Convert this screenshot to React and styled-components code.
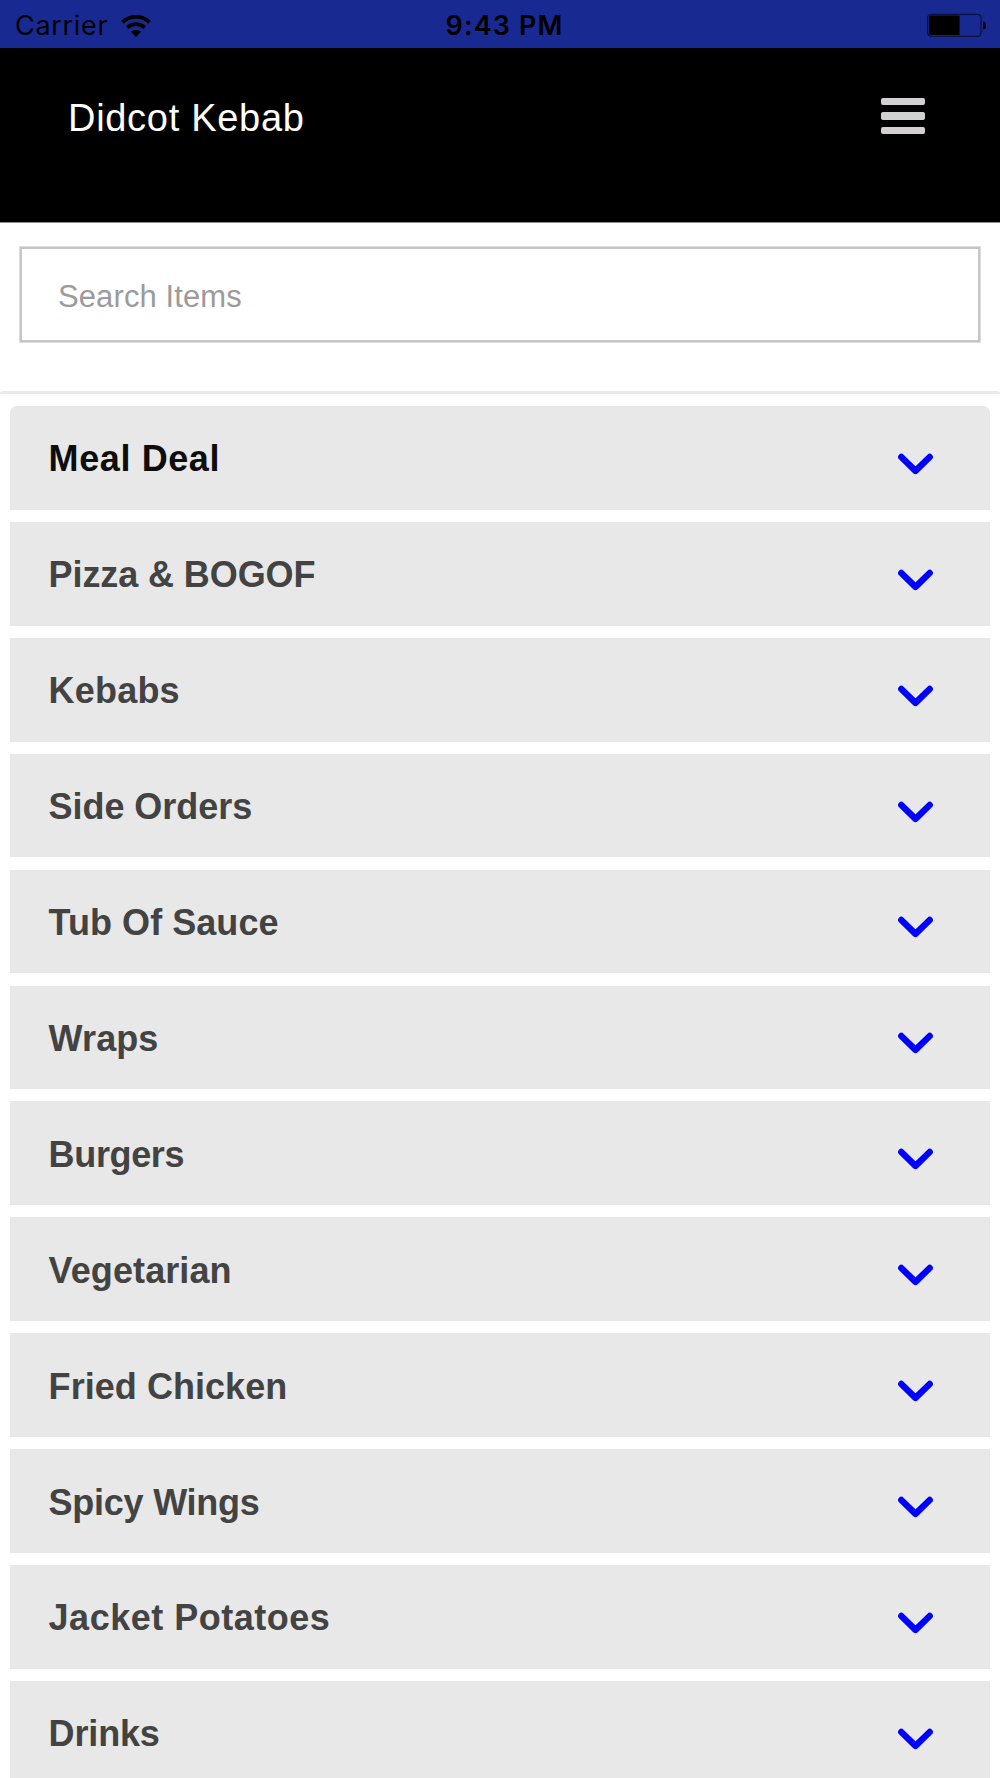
import React from "react";
import styled, { createGlobalStyle } from "styled-components";

const GlobalStyle = createGlobalStyle`
  * {
    box-sizing: border-box;
  }
  body {
    margin: 0;
    background: #fff;
    font-family: "Liberation Sans", Arial, sans-serif;
  }
`;

const Screen = styled.div`
  width: 1000px;
  height: 1778px;
  overflow: hidden;
  background: #fff;
`;

const StatusBar = styled.div`
  display: grid;
  grid-template-columns: 1fr auto 1fr;
  align-items: center;
  height: 48px;
  padding: 0 14px 0 15px;
  background: #182a92;
  color: #000;
  font-family: Inter, sans-serif;
  font-size: 27px;
  line-height: 48px;
`;

const Carrier = styled.div`
  display: flex;
  align-items: center;
  gap: 12px;
  padding-top: 1px;
  letter-spacing: 0.7px;
`;

const Time = styled.div`
  padding: 2px 0 0 8px;
  font-weight: 600;
  letter-spacing: 1.1px;
`;

const StatusIcon = styled.svg`
  display: block;
  justify-self: end;
`;

const Header = styled.header`
  display: flex;
  justify-content: space-between;
  height: 175px;
  padding: 49px 75px 0 68px;
  background: #000;
  border-bottom: 1px solid #8a8a8a;
`;

const Title = styled.h1`
  margin: 1px 0 0;
  color: #fff;
  font-size: 38px;
  font-weight: 400;
  line-height: 40px;
  letter-spacing: 0.7px;
`;

const MenuButton = styled.button`
  display: flex;
  flex-direction: column;
  gap: 6.8px;
  width: 44px;
  height: 37px;
  margin-top: 0.6px;
  padding: 0;
  border: 0;
  background: none;
`;

const MenuBar = styled.span`
  height: 7.7px;
  border-radius: 2px;
  background: #d2d0d2;
`;

const SearchArea = styled.div`
  height: 168px;
  padding: 24px 20px 0;
`;

const SearchInput = styled.input`
  display: block;
  width: 100%;
  height: 95px;
  padding: 4px 36px 0;
  border: 2px solid #c6c6c6;
  border-radius: 0;
  box-shadow: 0 0 0 1px #dedede;
  background: #fff;
  font-family: inherit;
  font-size: 31px;
  letter-spacing: 0.1px;
  &::placeholder {
    color: #9b9b9b;
    opacity: 1;
  }
`;

const Menu = styled.ul`
  display: flex;
  flex-direction: column;
  gap: 12.2px;
  margin: 0;
  padding: 12px 10px 0;
  border-top: 3px solid #e9e9e9;
  border-radius: 3px 3px 0 0;
  list-style: none;
`;

const MenuItem = styled.li`
  display: flex;
  align-items: center;
  justify-content: space-between;
  flex: none;
  height: 103.73px;
  padding: 3px 56px 0 38.6px;
  background: #e8e8e8;
  color: ${(p) => (p.$active ? "#0d0d0d" : "#434343")};
  font-size: 36px;
  font-weight: 700;
  letter-spacing: ${(p) => p.$tracking}px;
  &:first-child {
    border-radius: 7px 7px 0 0;
  }
`;

const Arrow = styled.svg`
  display: block;
  margin-top: 9px;
`;

const categories = [
  { name: "Meal Deal", tracking: 0.6 },
  { name: "Pizza & BOGOF", tracking: -0.1 },
  { name: "Kebabs", tracking: 0.2 },
  { name: "Side Orders", tracking: -0.05 },
  { name: "Tub Of Sauce", tracking: 0.05 },
  { name: "Wraps", tracking: 0.1 },
  { name: "Burgers", tracking: -0.35 },
  { name: "Vegetarian", tracking: 0.1 },
  { name: "Fried Chicken", tracking: 0.05 },
  { name: "Spicy Wings", tracking: -0.25 },
  { name: "Jacket Potatoes", tracking: 0.5 },
  { name: "Drinks", tracking: -0.15 },
];

const Wifi = () => (
  <StatusIcon width="32" height="24" viewBox="0 0 32 24">
    <g fill="none" stroke="#000" strokeWidth="3.9">
      <path d="M2.4 8.2a20 20 0 0 1 27.2 0" />
      <path d="M7.2 13.6a13 13 0 0 1 17.6 0" />
    </g>
    <path d="M10.9 17.8a7.4 7.4 0 0 1 10.2 0L16 23z" />
  </StatusIcon>
);

const Battery = () => (
  <StatusIcon width="60" height="24" viewBox="0 0 60 24">
    <rect
      x="1.6"
      y="1.3"
      width="53.4"
      height="22"
      rx="3.5"
      fill="none"
      stroke="#0a1244"
      strokeWidth="1.3"
    />
    <path d="M5 2.6h28.6v19.4H5a2 2 0 0 1-2-2V4.6a2 2 0 0 1 2-2z" />
    <path d="M57 8.5a3.2 4 0 0 1 0 8z" />
  </StatusIcon>
);

const ChevronDown = () => (
  <Arrow width="37" height="22" viewBox="0 0 37 22">
    <path
      d="M4.3 4l14.2 13.9L32.7 4"
      fill="none"
      stroke="#00f"
      strokeWidth="6.4"
      strokeLinecap="round"
      strokeLinejoin="round"
    />
  </Arrow>
);

const App = () => (
  <Screen>
    <GlobalStyle />
    <StatusBar>
      <Carrier>
        Carrier
        <Wifi />
      </Carrier>
      <Time>9:43 PM</Time>
      <Battery />
    </StatusBar>
    <Header>
      <Title>Didcot Kebab</Title>
      <MenuButton aria-label="Menu">
        <MenuBar />
        <MenuBar />
        <MenuBar />
      </MenuButton>
    </Header>
    <SearchArea>
      <SearchInput placeholder="Search Items" />
    </SearchArea>
    <Menu>
      {categories.map(({ name, tracking }, i) => (
        <MenuItem key={name} $active={i === 0} $tracking={tracking}>
          {name}
          <ChevronDown />
        </MenuItem>
      ))}
    </Menu>
  </Screen>
);

export default App;
